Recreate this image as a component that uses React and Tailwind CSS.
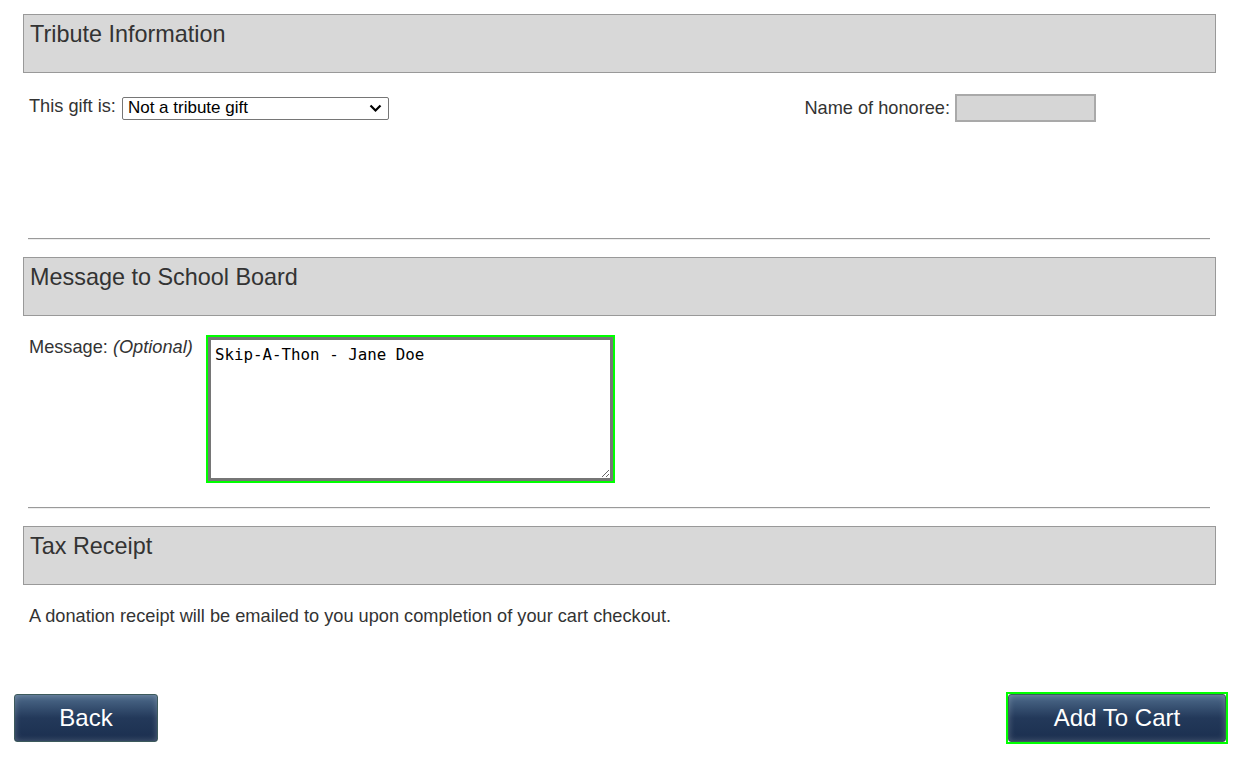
export default function App() {
  const font = { fontFamily: '"Liberation Sans", Arial, sans-serif' };
  const Header = ({ children }) => (
    <div className="mx-[23px] mr-[21px] h-[59px] border border-[#999] bg-[#d8d8d8] pl-[6px] pt-[5px] text-[23.4px] leading-[28px] text-[#333]">
      {children}
    </div>
  );
  const Hr = () => (
    <div className="ml-[28px] mr-[27px] h-[2px] border-t border-t-[#9a9a9a] border-b border-b-[#eeeeee]" />
  );
  return (
    <div className="min-h-[760px] w-[1237px] bg-white pt-[14px] text-[18.2px] text-[#333]" style={font}>
      <Header>Tribute Information</Header>

      <div className="mt-[21px] flex h-[28px] items-center pl-[29px]">
        <span className="-mt-[3px] leading-[21px]">This gift is:</span>
        <div className="ml-[6px] flex h-[23px] w-[267px] items-center justify-between rounded-[2px] border border-[#767676] bg-white pl-[5px] pr-[6px] text-[17px] text-black">
          <span>Not a tribute gift</span>
          <svg width="13" height="9" viewBox="0 0 13 9" fill="none">
            <path d="M1.5 1.5 L6.5 6.5 L11.5 1.5" stroke="#000" strokeWidth="2.2" />
          </svg>
        </div>
        <div className="ml-auto mr-[141px] flex items-center">
          <span className="mr-[5px] leading-[21px]">Name of honoree:</span>
          <div className="h-[28px] w-[141px] border-2 border-[#a9a9a9] bg-[#d6d6d6]" />
        </div>
      </div>

      <div className="mt-[116px]">
        <Hr />
      </div>

      <div className="mt-[17px]">
        <Header>Message to School Board</Header>
      </div>

      <div className="mt-[19px] flex pl-[29px]">
        <div className="w-[177px] pt-[2px] leading-[21px]">
          Message: <i>(Optional)</i>
        </div>
        <div className="border-2 border-[#00ff00]">
          <textarea
            className="block h-[144px] w-[405px] resize border-[3px] border-[#767676] bg-white pl-[4px] pt-[5px] text-[15.8px] leading-[19px] text-black outline-none"
            style={{ fontFamily: '"DejaVu Sans Mono", "Liberation Mono", monospace' }}
            defaultValue="Skip-A-Thon - Jane Doe"
          />
        </div>
      </div>

      <div className="mt-[24px]">
        <Hr />
      </div>

      <div className="mt-[17px]">
        <Header>Tax Receipt</Header>
      </div>

      <div className="mt-[21px] pl-[29px] leading-[21px]">
        A donation receipt will be emailed to you upon completion of your cart checkout.
      </div>

      <div className="mt-[65px] flex items-center justify-between pl-[14px] pr-[9px]">
        <button
          className="h-[48px] w-[144px] rounded-[3px] border border-[#3d5a5c] bg-gradient-to-b from-[#4f6c8c] via-[#23395a] to-[#1b2f4f] text-[24px] text-white shadow-[inset_0_0_6px_rgba(255,255,255,0.25)]"
          style={font}
        >
          Back
        </button>
        <div className="border-2 border-[#00ff00]">
          <button
            className="block h-[48px] w-[218px] rounded-[3px] border border-[#3d5a5c] bg-gradient-to-b from-[#4f6c8c] via-[#23395a] to-[#1b2f4f] text-[24px] text-white shadow-[inset_0_0_6px_rgba(255,255,255,0.25)]"
            style={font}
          >
            Add To Cart
          </button>
        </div>
      </div>
    </div>
  );
}
